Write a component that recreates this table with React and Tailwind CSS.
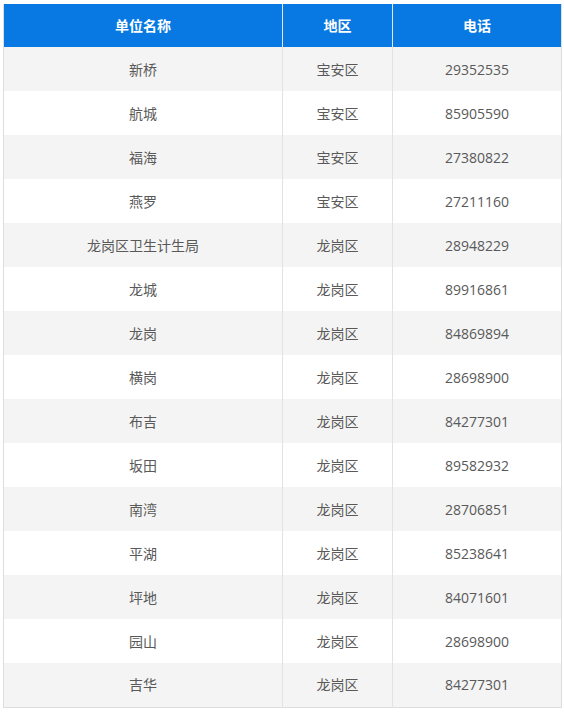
const ROWS = [
  ['新桥', '宝安区', '29352535'],
  ['航城', '宝安区', '85905590'],
  ['福海', '宝安区', '27380822'],
  ['燕罗', '宝安区', '27211160'],
  ['龙岗区卫生计生局', '龙岗区', '28948229'],
  ['龙城', '龙岗区', '89916861'],
  ['龙岗', '龙岗区', '84869894'],
  ['横岗', '龙岗区', '28698900'],
  ['布吉', '龙岗区', '84277301'],
  ['坂田', '龙岗区', '89582932'],
  ['南湾', '龙岗区', '28706851'],
  ['平湖', '龙岗区', '85238641'],
  ['坪地', '龙岗区', '84071601'],
  ['园山', '龙岗区', '28698900'],
  ['吉华', '龙岗区', '84277301'],
];

export default function App() {
  return (
    <div
      className="w-[564px] h-[712px] bg-white pt-[4px] pl-[3px]"
      style={{ fontFamily: '"Open Sans", "Noto Sans CJK SC", sans-serif' }}
    >
      <table className="w-[558px] border-collapse table-fixed border-b border-l border-r border-[#dddddd]">
        <colgroup>
          <col className="w-[279px]" />
          <col className="w-[110px]" />
          <col className="w-[169px]" />
        </colgroup>
        <thead>
          <tr className="h-[43px] bg-[#0878e2] text-white text-[14px] font-bold">
            <th className="text-center">单位名称</th>
            <th className="text-center border-l border-[#e6e6e6]">地区</th>
            <th className="text-center border-l border-[#e6e6e6]">电话</th>
          </tr>
        </thead>
        <tbody>
          {ROWS.map((r, i) => (
            <tr
              key={i}
              className={`h-[44px] text-[14px] text-[#595959] ${i % 2 === 0 ? 'bg-[#f4f4f4]' : 'bg-white'}`}
            >
              <td className="text-center">{r[0]}</td>
              <td className="text-center border-l border-[#e2e2e2]">{r[1]}</td>
              <td className="text-center border-l border-[#e2e2e2]">{r[2]}</td>
            </tr>
          ))}
        </tbody>
      </table>
    </div>
  );
}
